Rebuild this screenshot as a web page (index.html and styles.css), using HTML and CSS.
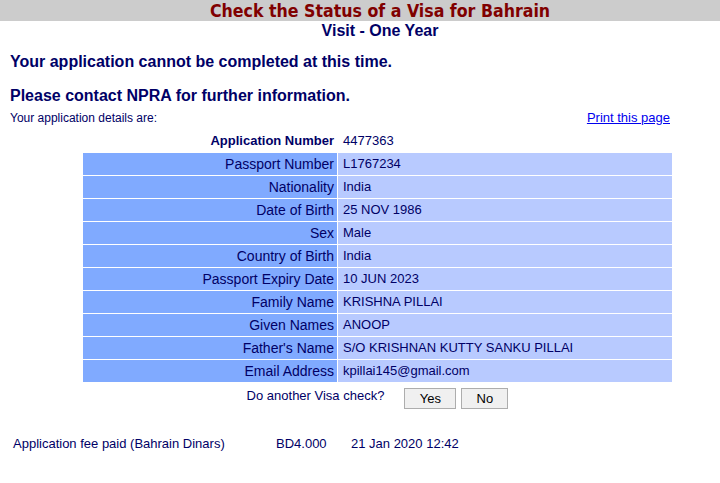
FILE: index.html
```html
<!DOCTYPE html>
<html>
<head>
<meta charset="utf-8">
<link rel="stylesheet" href="styles.css">
</head>
<body>
<div class="topbar"><span class="title">Check the Status of a Visa for Bahrain</span></div>
<div class="subtitle">Visit - One Year</div>
<h2 class="msg msg1">Your application cannot be completed at this time.</h2>
<h2 class="msg msg2">Please contact NPRA for further information.</h2>
<div class="details-line">
  <span>Your application details are:</span>
  <a href="#" class="print">Print this page</a>
</div>
<table class="details">
  <tr class="appno"><th>Application Number</th><td>4477363</td></tr>
  <tr><th>Passport Number</th><td>L1767234</td></tr>
  <tr><th>Nationality</th><td>India</td></tr>
  <tr><th>Date of Birth</th><td>25 NOV 1986</td></tr>
  <tr><th>Sex</th><td>Male</td></tr>
  <tr><th>Country of Birth</th><td>India</td></tr>
  <tr><th>Passport Expiry Date</th><td>10 JUN 2023</td></tr>
  <tr><th>Family Name</th><td>KRISHNA PILLAI</td></tr>
  <tr><th>Given Names</th><td>ANOOP</td></tr>
  <tr><th>Father's Name</th><td>S/O KRISHNAN KUTTY SANKU PILLAI</td></tr>
  <tr><th>Email Address</th><td>kpillai145@gmail.com</td></tr>
</table>
<div class="again">
  <span class="again-label">Do another Visa check?</span>
  <button class="btn btn-yes">Yes</button>
  <button class="btn btn-no">No</button>
</div>
<div class="fee">
  <span class="fee-label">Application fee paid (Bahrain Dinars)</span>
  <span class="fee-amount">BD4.000</span>
  <span class="fee-date">21 Jan 2020 12:42</span>
</div>
</body>
</html>
```

FILE: styles.css
```css
html, body {
  margin: 0;
  padding: 0;
  background: #ffffff;
  overflow: hidden;
}
body {
  font-family: "Liberation Sans", Arial, sans-serif;
  color: #000066;
  width: 720px;
}
.topbar {
  background: #cccccc;
  height: 21px;
  display: flex;
  justify-content: center;
  align-items: center;
  padding-left: 40px;
}
.title {
  font-family: "DejaVu Sans Condensed", "DejaVu Sans", sans-serif;
  font-weight: bold;
  font-size: 17.6px;
  color: #800000;
  line-height: 21px;
  position: relative;
  top: 1px;
}
.subtitle {
  text-align: center;
  padding-left: 40px;
  font-weight: bold;
  font-size: 16px;
  line-height: 18px;
  margin-top: 1px;
}
.msg {
  margin: 0;
  padding-left: 10px;
  font-size: 16px;
  font-weight: bold;
  line-height: 20px;
}
.msg1 { margin-top: 12px; }
.msg2 { margin-top: 14px; }
.details-line {
  display: flex;
  justify-content: space-between;
  padding: 0 50px 0 10px;
  font-size: 12px;
  line-height: 14px;
  margin-top: 5px;
}
.print {
  font-size: 13px;
  color: #0000ee;
  text-decoration: underline;
}
.details {
  margin: 0 0 0 82px;
  width: 591px;
  border-collapse: separate;
  border-spacing: 1px;
  margin-top: 4px;
}
.details th, .details td {
  height: 22px;
  padding: 0;
  line-height: 16px;
}
.details th {
  width: 254px;
  text-align: right;
  font-weight: normal;
  font-size: 14px;
  padding-right: 3px;
  box-sizing: border-box;
  background: #80aaff;
}
.details td {
  font-size: 13px;
  padding-left: 5px;
  background: #b8caff;
}
.details .appno th {
  font-weight: bold;
  font-size: 13px;
  background: transparent;
}
.details .appno td {
  background: transparent;
}
.again {
  display: flex;
  justify-content: center;
  align-items: center;
  padding-left: 35px;
  margin-top: 5px;
  font-size: 13px;
}
.again-label {
  margin-right: 20px;
  position: relative;
  top: -3px;
}
.btn {
  font-family: "Liberation Sans", Arial, sans-serif;
  font-size: 13px;
  color: #000000;
  background: #f0f0f0;
  border: 1px solid #adadad;
  height: 21px;
  padding: 0;
}
.btn-yes { width: 52px; margin-right: 5px; }
.btn-no { width: 47px; }
.fee {
  display: flex;
  font-size: 13px;
  margin-top: 27px;
  padding-left: 13px;
}
.fee-label { width: 263px; }
.fee-amount { width: 75px; }
```
